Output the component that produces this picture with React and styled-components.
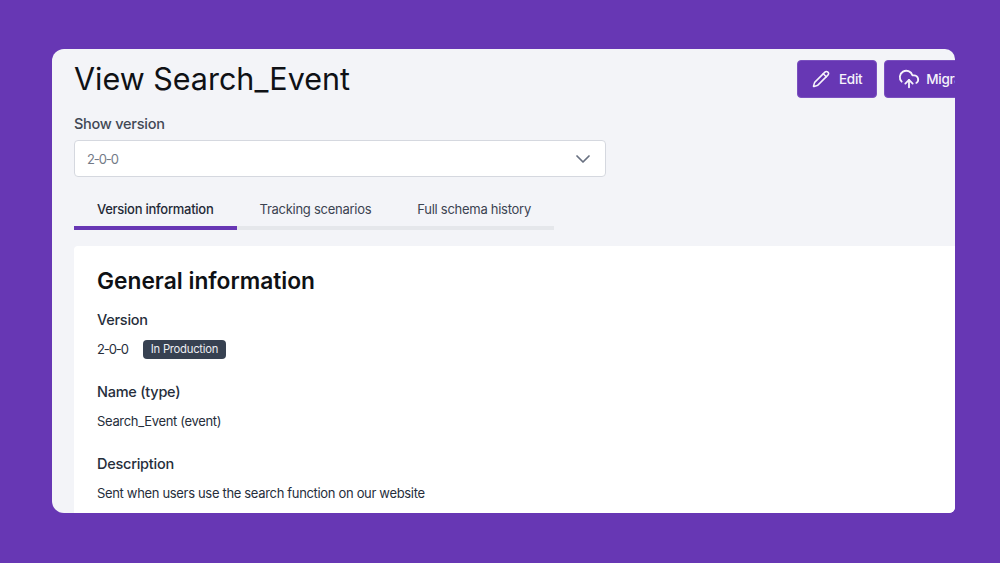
import React from "react";
import styled, { createGlobalStyle } from "styled-components";
import { Pencil, CloudUpload, ChevronDown } from "lucide-react";

const GlobalStyle = createGlobalStyle`
  html, body {
    margin: 0;
    height: 100%;
    background: #6737b4;
    font-family: Inter, "Liberation Sans", sans-serif;
  }
  * { box-sizing: border-box; }
`;

const Page = styled.div`
  width: 1000px;
  height: 563px;
  padding: 49px 45px 50px 52px;
  overflow: hidden;
`;

const Frame = styled.div`
  height: 464px;
  background: #f3f4f8;
  border-radius: 12px 10px 6px 12px;
  overflow: hidden;
  padding: 11px 0 0 22px;
`;

const Header = styled.div`
  display: flex;
  justify-content: space-between;
  align-items: flex-start;
  height: 38px;
`;

const Title = styled.h1`
  margin: 0;
  font-size: 30.5px;
  line-height: 38px;
  font-weight: 400;
  color: #0f1115;
`;

const Actions = styled.div`
  display: flex;
  gap: 7px;
  width: 158px;
  flex: none;
`;

const ActionButton = styled.button`
  display: flex;
  align-items: center;
  flex: none;
  gap: ${(p) => p.$gap}px;
  height: 38px;
  padding: 0 14px 0 ${(p) => p.$left}px;
  border: 1px solid #7a50bf;
  border-radius: 4px;
  background: #6737b4;
  color: #f6f3fb;
  font: 500 13.5px Inter, sans-serif;
  letter-spacing: -0.3px;
  white-space: nowrap;
`;

const SelectLabel = styled.div`
  margin-top: 16px;
  font-size: 14.5px;
  line-height: 19px;
  font-weight: 500;
  letter-spacing: -0.25px;
  color: #414855;
`;

const Select = styled.div`
  display: flex;
  align-items: center;
  justify-content: space-between;
  width: 532px;
  height: 37px;
  margin-top: 7px;
  padding: 0 10px 0 12px;
  background: #fff;
  border: 1px solid #d5d8df;
  border-radius: 4px;
  font-size: 13px;
  color: #737a87;
`;

const VersionText = styled.span`
  letter-spacing: -1.1px;
`;

const Tabs = styled.div`
  display: flex;
  width: 480px;
  height: 53px;
  border-bottom: 4px solid #e5e7eb;
`;

const Tab = styled.div`
  display: flex;
  align-items: center;
  flex: none;
  height: 53px;
  padding: 23px 23px 8px;
  font-size: 13px;
  letter-spacing: -0.27px;
  white-space: nowrap;
  font-weight: ${(p) => (p.$active ? 500 : 400)};
  color: ${(p) => (p.$active ? "#1f2937" : "#3b4351")};
  border-bottom: 4px solid ${(p) => (p.$active ? "#6737b4" : "transparent")};
`;

const Card = styled.div`
  height: 300px;
  margin-top: 16px;
  padding: 19px 23px;
  background: #fff;
  border-radius: 4px 0 0 0;
`;

const CardTitle = styled.h2`
  margin: 0 0 13px;
  font-size: 22.75px;
  line-height: 32px;
  font-weight: 600;
  color: #0f1115;
`;

const Section = styled.div`
  margin-bottom: 23px;
`;

const FieldLabel = styled.div`
  font-size: 14.5px;
  line-height: 19px;
  font-weight: 500;
  letter-spacing: -0.25px;
  color: #262e3b;
`;

const FieldValue = styled.div`
  display: flex;
  align-items: center;
  gap: 15px;
  height: 20px;
  margin-top: 10px;
  font-size: 13px;
  letter-spacing: -0.33px;
  color: #262e3b;
`;

const Badge = styled.span`
  padding: 0 8px;
  height: 19px;
  line-height: 19px;
  border-radius: 4px;
  background: #374151;
  color: #eceef1;
  font-size: 11.25px;
  letter-spacing: -0.25px;
`;

export default function App() {
  return (
    <>
      <GlobalStyle />
      <Page>
        <Frame>
          <Header>
            <Title>View Search_Event</Title>
            <Actions>
              <ActionButton $gap={9} $left={14}>
                <Pencil size={18} />
                Edit
              </ActionButton>
              <ActionButton $gap={6} $left={13}>
                <CloudUpload size={22} />
                Migrate
              </ActionButton>
            </Actions>
          </Header>
          <SelectLabel>Show version</SelectLabel>
          <Select>
            <VersionText>2-0-0</VersionText>
            <ChevronDown size={24} strokeWidth={1.75} color="#687080" />
          </Select>
          <Tabs>
            <Tab $active>Version information</Tab>
            <Tab>Tracking scenarios</Tab>
            <Tab>Full schema history</Tab>
          </Tabs>
          <Card>
            <CardTitle>General information</CardTitle>
            <Section>
              <FieldLabel>Version</FieldLabel>
              <FieldValue>
                <VersionText>2-0-0</VersionText>
                <Badge>In Production</Badge>
              </FieldValue>
            </Section>
            <Section>
              <FieldLabel>Name (type)</FieldLabel>
              <FieldValue>Search_Event (event)</FieldValue>
            </Section>
            <Section>
              <FieldLabel>Description</FieldLabel>
              <FieldValue>Sent when users use the search function on our website</FieldValue>
            </Section>
          </Card>
        </Frame>
      </Page>
    </>
  );
}
